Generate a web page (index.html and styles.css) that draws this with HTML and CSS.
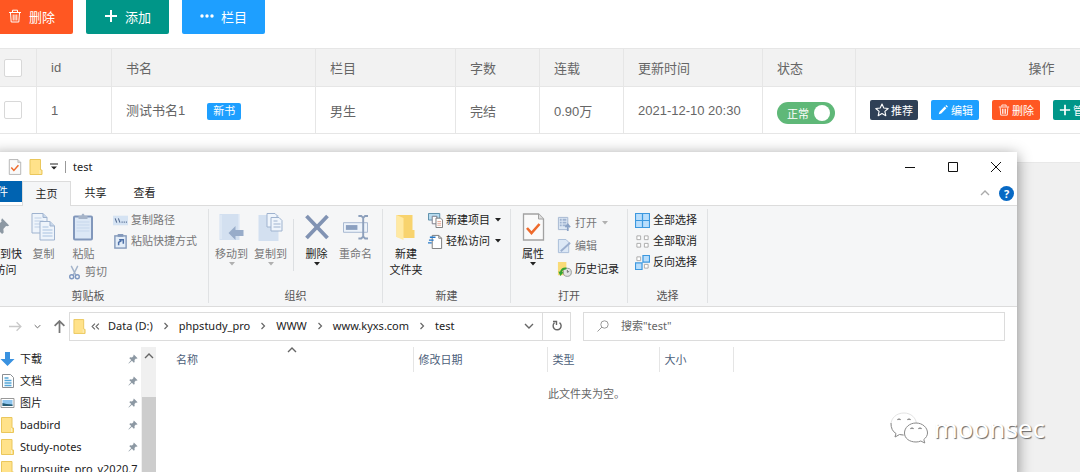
FILE: index.html
```html
<!DOCTYPE html>
<html lang="zh-CN">
<head>
<meta charset="utf-8">
<title>test</title>
<link rel="stylesheet" href="styles.css">
</head>
<body>
<svg class="sprite" aria-hidden="true">
  <symbol id="trash" viewBox="0 0 14 14"><path d="M1 3.500h12M4.500 3V1.200h5V3M2.500 4l.7 9h7.600l.7-9M5.200 5.500v6M7 5.500v6M8.800 5.500v6" fill="none" stroke="currentColor" stroke-width="1"/></symbol>
  <symbol id="plus" viewBox="0 0 14 14"><path d="M7 1v12M1 7h12" stroke="currentColor" stroke-width="2"/></symbol>
  <symbol id="dots" viewBox="0 0 14 14"><g fill="currentColor"><circle cx="2" cy="7" r="1.700"/><circle cx="7" cy="7" r="1.700"/><circle cx="12" cy="7" r="1.700"/></g></symbol>
  <symbol id="star" viewBox="0 0 14 14"><path d="M7 1l1.800 4 4.400.5-3.300 2.900.9 4.300L7 10.500l-3.800 2.200.9-4.300L.8 5.500 5.200 5z" fill="none" stroke="currentColor" stroke-width="1.100" stroke-linejoin="round"/></symbol>
  <symbol id="pencil" viewBox="0 0 14 14"><path d="M2 12l1-3 6-6 2 2-6 6zM9.800 2.200l1-1 2 2-1 1z" fill="currentColor"/></symbol>
  <symbol id="folder" viewBox="0 0 14 16"><path d="M1 .5h10.500V11H13v4.500H1z" fill="#ffe28a" stroke="#eac75c"/><path d="M11 11v4" stroke="#f8f0c8"/></symbol>
  <symbol id="check-doc" viewBox="0 0 22 28"><path d="M1 1h15l5 5v21H1z" fill="#fafafa" stroke="#a2a2a2" stroke-width="1.300"/><path d="M16 1v5h5" fill="#ddd" stroke="#a2a2a2"/><path d="M4.500 15l4.500 5 8-9" fill="none" stroke="#ee6a2c" stroke-width="2.600"/></symbol>
  <symbol id="pin" viewBox="0 0 12 12"><path d="M7 .5L11.500 5l-1.200.6-.8-.3-1.700 1.900.2 2.300-1 .9-2.300-2.300L1 11.500.5 11l3.400-3.700L1.600 5l.9-1 2.300.2 1.900-1.700-.3-.8z" fill="#8c98a3"/></symbol>
  <symbol id="down" viewBox="0 0 6 4"><path d="M0 0h6L3 3.500z" fill="currentColor"/></symbol>
  <symbol id="chev" viewBox="0 0 10 6"><path d="M1 1l4 4 4-4" fill="none" stroke="currentColor" stroke-width="1.400"/></symbol>
  <symbol id="chev-r" viewBox="0 0 6 8"><path d="M1.500 1l3 3-3 3" fill="none" stroke="currentColor" stroke-width="1.200"/></symbol>
  <symbol id="copy" viewBox="0 0 24 28"><g stroke="#9fb3cf" fill="#eef4fb"><path d="M.5.5h11l4 4V20H.5z"/><path d="M11.500.5v4h4" fill="#c9d8eb"/><path d="M3 5h7M3 8h9M3 11h9M3 14h9" stroke="#bfd0e6"/><path d="M8.500 8.500h10l4.500 4.500v14H8.500z"/><path d="M18.500 8.500V13H23" fill="#c9d8eb"/><path d="M11 14h6M11 17h10M11 20h10M11 23h10" stroke="#a9c2e0"/></g></symbol>
  <symbol id="clip" viewBox="0 0 22 28"><rect x="1.500" y="3.500" width="18" height="23" rx="1" fill="#dce8f6" stroke="#8197bb" stroke-width="2"/><path d="M4 9h13M4 12h13M4 15h13M4 18h13" stroke="#c6d7ec"/><path d="M6 6V3h3q0-2.500 1.500-2.500T12 3h3v3z" fill="#a5b3c8"/></symbol>
  <symbol id="path" viewBox="0 0 14 10"><path d="M0 .5h14v9H0z" fill="#d5e3f3"/><path d="M2 3l1.500 4M5 3l1.500 4M8 6.500h1M10 6.500h1M12 6.500h1" stroke="#536b91"/></symbol>
  <symbol id="shortcut" viewBox="0 0 14 16"><rect x="1" y="2" width="12" height="13" fill="#e3edf8" stroke="#8499bb" stroke-width="1.500"/><path d="M4 0h6v3H4z" fill="#8499bb"/><path d="M5 12V9l3-2M5.500 6H10v4.500" fill="none" stroke="#4d70a8" stroke-width="1.600"/></symbol>
  <symbol id="scissors" viewBox="0 0 12 16"><path d="M2.500 1l5 10M9.500 1l-5 10" stroke="#a3b3ca" stroke-width="1.500"/><g fill="none" stroke="#7e97c0" stroke-width="1.500"><circle cx="3" cy="12.500" r="2.100"/><circle cx="9" cy="12.500" r="2.100"/></g></symbol>
  <symbol id="move" viewBox="0 0 24 28"><path d="M0 1h20v26H0z" fill="#d3e0f0"/><path d="M1.500 2v24M19.500 1v20" stroke="#e7eff8"/><path d="M9 20l7-7v4h8v6h-8v4z" fill="#98acc9"/></symbol>
  <symbol id="copy-to" viewBox="0 0 24 28"><path d="M0 2h20v26H0z" fill="#d3e0f0"/><g fill="#eff5fc" stroke="#9fb3cf"><path d="M8.500.5h8l2 2V14h-10z"/><path d="M12.500 4.500h8l3 3V18h-11z"/><path d="M15 8h4M15 11h7M15 14h7"/></g></symbol>
  <symbol id="cross" viewBox="0 0 24 28"><path d="M2 3l21 22M23 3L2 25" stroke="#8193b3" stroke-width="3.800"/></symbol>
  <symbol id="rename" viewBox="0 0 26 28"><path d="M.5 9.500h25v10H.5z" fill="#edf3fa" stroke="#a5b6cf"/><path d="M3 12h12v5H3z" fill="#8ba0c0"/><path d="M16 2.500h3l2 2 2-2h3M21 4v20M16 26h3l2-2 2 2h3" fill="none" stroke="#8da0bc" stroke-width="2"/></symbol>
  <symbol id="big-folder" viewBox="0 0 20 28"><path d="M0 2h16v15h2v8H8l-8-1z" fill="#f8d36e"/><path d="M0 2l7 3v22l-7-3z" fill="#ffe9a3"/></symbol>
  <symbol id="new-item" viewBox="0 0 16 16"><path d="M.5.5h12v7H.5z" fill="#b8dcf0" stroke="#568ba8"/><path d="M4.500 3.500h5v8h-5z" fill="#fff" stroke="#778"/><path d="M8.500 5.500h5l2 2v8h-7z" fill="#fff" stroke="#777"/><path d="M10 9h4M10 11h4M10 13h4" stroke="#e3a290"/></symbol>
  <symbol id="easy" viewBox="0 0 16 16"><path d="M4.500 1.500h7l3 3v11h-10z" fill="#fff" stroke="#777"/><path d="M11.500 1.500v3h3" fill="none" stroke="#777"/><path d="M2 3.500h6M1 6.500h5M0 9.500h4" stroke="#2779c8" stroke-width="1.500"/></symbol>
  <symbol id="open" viewBox="0 0 14 16"><path d="M.5 1.500h10v13H.5z" fill="#dce7f4" stroke="#a4b6d0"/><path d="M2 4h2M2 7h2M2 10h2M5 4h4M5 7h4M5 10h4" stroke="#9fb3d0" stroke-width="2"/><path d="M10.500 16v-6M8 12l2.500-3 2.500 3" fill="none" stroke="#8aa2c5" stroke-width="1.800"/></symbol>
  <symbol id="edit" viewBox="0 0 14 16"><path d="M.5.5h8l3 3v11H.5z" fill="#dce8f6" stroke="#a7bcd8"/><path d="M3 13L13 4" stroke="#9bafcf" stroke-width="2"/></symbol>
  <symbol id="history" viewBox="0 0 16 16"><path d="M1 0h9v9h2v5H1z" fill="#f9db77"/><circle cx="11" cy="11" r="4.300" fill="#e3e5e5" stroke="#939696"/><path d="M11 8.500V11l2-1" fill="none" stroke="#666"/><path d="M4 12q1-6 6-5" fill="none" stroke="#33a432" stroke-width="2.200"/><path d="M1.500 10l5.500 1-3.500 4z" fill="#33a432"/></symbol>
  <symbol id="sel-all" viewBox="0 0 16 16"><path d="M.5.5h15v15H.5zM8 0v16M0 8h16" fill="#b9defc" stroke="#3c98df" stroke-width="1.300"/></symbol>
  <symbol id="sel-none" viewBox="0 0 16 16"><path d="M2 2h4v4H2zM10 2h4v4h-4zM2 10h4v4H2zM10 10h4v4h-4z" fill="#fff" stroke="#aaa"/></symbol>
  <symbol id="sel-inv" viewBox="0 0 16 16"><path d="M8.500.5h7v7h-7zM.5 8.500h7v7h-7z" fill="#b9defc" stroke="#3c98df" stroke-width="1.300"/><path d="M2 2h4v4H2zM10 10h4v4h-4z" fill="#fff" stroke="#aaa"/></symbol>
</svg>

<main class="panel">
  <div class="toolbar">
    <button class="btn red"><svg class="i14"><use href="#trash"/></svg>删除</button>
    <button class="btn green"><svg class="i14"><use href="#plus"/></svg>添加</button>
    <button class="btn blue"><svg class="i14"><use href="#dots"/></svg>栏目</button>
  </div>
  <div class="table-wrap">
    <table class="books">
      <colgroup><col class="c-check"><col class="c-id"><col class="c-name"><col class="c-cat"><col class="c-num"><col class="c-num"><col class="c-time"><col class="c-state"><col></colgroup>
      <thead>
        <tr><th class="check"><input type="checkbox" class="box" aria-label="全选"></th><th>id</th><th>书名</th><th>栏目</th><th>字数</th><th>连载</th><th>更新时间</th><th>状态</th><th class="center">操作</th></tr>
      </thead>
      <tbody>
        <tr>
          <td class="check"><input type="checkbox" class="box" aria-label="选择 1"></td><td>1</td>
          <td>测试书名1<span class="badge">新书</span></td><td>男生</td><td>完结</td><td>0.90万</td><td>2021-12-10 20:30</td>
          <td class="state"><label class="switch">正常<input type="checkbox" checked></label></td>
          <td><div class="ops">
            <button class="op navy"><svg class="i14"><use href="#star"/></svg>推荐</button>
            <button class="op blue"><svg class="i12"><use href="#pencil"/></svg>编辑</button>
            <button class="op red"><svg class="i12"><use href="#trash"/></svg>删除</button>
            <button class="op green"><svg class="i12"><use href="#plus"/></svg>管理</button>
          </div></td>
        </tr>
      </tbody>
    </table>
  </div>
</main>

<section class="window" aria-label="test">
  <header class="titlebar">
    <svg class="tb-icon"><use href="#check-doc"/></svg>
    <svg class="tb-icon"><use href="#folder"/></svg>
    <svg class="tb-more" viewBox="0 0 8 7"><path d="M0 1h8" stroke="#222"/><path d="M1 3.500h6L4 6.500z" fill="#222"/></svg>
    <span class="tb-sep"></span>
    <span>test</span>
    <div class="controls">
      <button aria-label="最小化"><svg viewBox="0 0 10 10"><path d="M0 5.500h10" stroke="#111"/></svg></button>
      <button aria-label="最大化"><svg viewBox="0 0 10 10"><path d="M.5.5h9v9h-9z" fill="none" stroke="#111"/></svg></button>
      <button aria-label="关闭"><svg viewBox="0 0 10 10"><path d="M0 0l10 10M10 0L0 10" stroke="#111"/></svg></button>
    </div>
  </header>
  <nav class="tabs">
    <button class="tab file">文件</button>
    <button class="tab active">主页</button>
    <button class="tab">共享</button>
    <button class="tab">查看</button>
    <div class="help">
      <svg class="chev up"><use href="#chev"/></svg>
      <button class="help-btn" aria-label="帮助">?</button>
    </div>
  </nav>

  <div class="ribbon">
    <div class="group clipboard">
      <div class="tools">
        <button class="tool dark wide"><svg class="pin-big"><use href="#pin"/></svg><span>固定到快速访问</span></button>
        <button class="tool"><svg><use href="#copy"/></svg><span>复制</span></button>
        <button class="tool"><svg><use href="#clip"/></svg><span>粘贴</span></button>
        <div class="list">
          <button class="row"><svg><use href="#path"/></svg>复制路径</button>
          <button class="row"><svg><use href="#shortcut"/></svg>粘贴快捷方式</button>
        </div>
        <button class="row cut"><svg><use href="#scissors"/></svg>剪切</button>
      </div>
      <div class="caption">剪贴板</div>
    </div>
    <div class="group organize">
      <div class="tools">
        <button class="tool"><svg><use href="#move"/></svg><span>移动到</span><svg class="arrow"><use href="#down"/></svg></button>
        <button class="tool"><svg><use href="#copy-to"/></svg><span>复制到</span><svg class="arrow"><use href="#down"/></svg></button>
        <span class="divider"></span>
        <button class="tool dark"><svg><use href="#cross"/></svg><span>删除</span><svg class="arrow"><use href="#down"/></svg></button>
        <button class="tool"><svg><use href="#rename"/></svg><span>重命名</span></button>
      </div>
      <div class="caption">组织</div>
    </div>
    <div class="group create">
      <div class="tools">
        <button class="tool dark"><svg><use href="#big-folder"/></svg><span>新建<br>文件夹</span></button>
        <div class="list">
          <button class="row dark"><svg><use href="#new-item"/></svg>新建项目<svg class="arrow"><use href="#down"/></svg></button>
          <button class="row dark"><svg><use href="#easy"/></svg>轻松访问<svg class="arrow"><use href="#down"/></svg></button>
        </div>
      </div>
      <div class="caption">新建</div>
    </div>
    <div class="group opening">
      <div class="tools">
        <button class="tool dark"><svg><use href="#check-doc"/></svg><span>属性</span><svg class="arrow"><use href="#down"/></svg></button>
        <div class="list loose">
          <button class="row"><svg><use href="#open"/></svg>打开<svg class="arrow"><use href="#down"/></svg></button>
          <button class="row"><svg><use href="#edit"/></svg>编辑</button>
          <button class="row dark"><svg><use href="#history"/></svg>历史记录</button>
        </div>
      </div>
      <div class="caption">打开</div>
    </div>
    <div class="group selecting">
      <div class="tools">
        <div class="list">
          <button class="row dark"><svg><use href="#sel-all"/></svg>全部选择</button>
          <button class="row dark"><svg><use href="#sel-none"/></svg>全部取消</button>
          <button class="row dark"><svg><use href="#sel-inv"/></svg>反向选择</button>
        </div>
      </div>
      <div class="caption">选择</div>
    </div>
  </div>

  <div class="location">
    <div class="arrows">
      <svg class="nav-arrow" viewBox="0 0 12 12"><path d="M0 6h11M7 2l4 4-4 4" fill="none" stroke="#c9c9c9" stroke-width="1.200"/></svg>
      <svg class="chev tiny"><use href="#chev"/></svg>
      <svg class="nav-arrow" viewBox="0 0 12 12"><path d="M6 12V1M1.500 5.500L6 1l4.500 4.500" fill="none" stroke="#777" stroke-width="1.600"/></svg>
    </div>
    <div class="address">
      <svg class="f-icon"><use href="#folder"/></svg>
      <svg class="back" viewBox="0 0 8 8"><path d="M3.500 1.500L1 4l2.500 2.500M7 1.500L4.500 4 7 6.500" fill="none" stroke="#666"/></svg>
      <a href="#d">Data (D:)</a><svg class="sep"><use href="#chev-r"/></svg>
      <a href="#p">phpstudy_pro</a><svg class="sep"><use href="#chev-r"/></svg>
      <a href="#w">WWW</a><svg class="sep"><use href="#chev-r"/></svg>
      <a href="#k">www.kyxs.com</a><svg class="sep"><use href="#chev-r"/></svg>
      <a href="#t">test</a>
      <svg class="chev drop"><use href="#chev"/></svg>
      <button class="refresh" aria-label="刷新"><svg viewBox="0 0 12 12"><path d="M8.500 2.600A4 4 0 1 1 3.500 2.800M2 1.500h3.500V5" fill="none" stroke="#666" stroke-width="1.400"/></svg></button>
    </div>
    <label class="search">
      <svg viewBox="0 0 12 12"><circle cx="7.500" cy="4.500" r="3.700" fill="none" stroke="#999"/><path d="M5 7L.5 11.500" stroke="#999"/></svg>
      <input type="text" placeholder="搜索&quot;test&quot;" aria-label="搜索">
    </label>
  </div>

  <div class="content">
    <ul class="places">
      <li><svg class="p-icon" viewBox="0 0 14 16"><path d="M4.500 1h5v7H14l-7 7-7-7h4.500z" fill="#3a92e0"/></svg><a href="#1">下载</a><svg class="pin"><use href="#pin"/></svg></li>
      <li><svg class="p-icon" viewBox="0 0 14 16"><path d="M2 1.500h8l3 3v10H2z" fill="#fff" stroke="#8a8f94"/><path d="M4 5h4M4 7.500h7M4 10h7M4 12.500h7" stroke="#54a6d8" stroke-width="1.500"/></svg><a href="#2">文档</a><svg class="pin"><use href="#pin"/></svg></li>
      <li><svg class="p-icon" viewBox="0 0 14 16"><path d="M.5 3.500h13v9H.5z" fill="#fff" stroke="#999"/><path d="M2 5h10v6H2z" fill="#8fc6ef"/><path d="M2 8l4 1 6 .5V11H2z" fill="#245c75"/></svg><a href="#3">图片</a><svg class="pin"><use href="#pin"/></svg></li>
      <li><svg class="p-icon"><use href="#folder"/></svg><a href="#4">badbird</a><svg class="pin"><use href="#pin"/></svg></li>
      <li><svg class="p-icon"><use href="#folder"/></svg><a href="#5">Study-notes</a><svg class="pin"><use href="#pin"/></svg></li>
      <li><svg class="p-icon"><use href="#folder"/></svg><a href="#6">burpsuite_pro_v2020.7</a></li>
    </ul>
    <div class="scroll"><svg class="chev up"><use href="#chev"/></svg><div class="thumb"></div></div>
    <div class="files">
      <table class="cols">
        <tr><th class="f-name">名称<svg class="chev up sort"><use href="#chev"/></svg></th><th class="f-date">修改日期</th><th class="f-type">类型</th><th class="f-size">大小</th><th class="f-rest"></th></tr>
      </table>
      <p class="empty">此文件夹为空。</p>
    </div>
  </div>
</section>

<div class="watermark">
  <svg viewBox="0 0 38 32"><g fill="#fff"><path d="M14 1C6.500 1 1 6 1 12.500c0 4 2 7 5 9L5 25l4.500-2.500c9 2.500 17-2.500 17-10C26.500 6 21 1 14 1z" stroke="#e4e4e4"/><path d="M1 11c0 5 1.500 8.500 5 10.500L5 25l4.500-2.500 4 .5" stroke="#8a8a8a"/><path d="M26 11c-6.500 0-11.500 4.500-11.500 10S19.500 30 26 30c1.800 0 3.300-.3 4.800-1l4 2-1-3.500c2.200-1.700 3.700-4 3.700-6.500 0-5.500-5-10-11.500-10z" stroke="#8a8a8a"/></g><path d="M7.500 8q1.500-2 3 0M17.500 8q1.500-2 3 0M20.500 17q1.500-2 3 0M28.500 17q1.500-2 3 0" fill="none" stroke="#777" stroke-width="1.200"/></svg>
  <span>moonsec</span>
</div>
</body>
</html>
```
FILE: styles.css
```css
* { box-sizing: border-box; }

body {
  margin: 0;
  height: 100vh;
  overflow: hidden;
  position: relative;
  background: #f0f0f0;
  font-family: "Liberation Sans", "Noto Sans CJK SC", sans-serif;
  font-size: 13px;
  color: #666;
}

.sprite { display: none; }
svg { flex: none; display: block; }

button {
  border: 0;
  margin: 0;
  padding: 0;
  background: none;
  font: inherit;
  color: inherit;
  white-space: nowrap;
}

a { color: inherit; text-decoration: none; }

.i14 { width: 14px; height: 14px; }
.i12 { width: 12px; height: 12px; }

/* Book list */
.panel {
  background: #fff;
  padding-bottom: 28px;
  border-bottom: 1px solid #e8e8e8;
  overflow: hidden;
}

.toolbar {
  display: flex;
  gap: 13px;
  margin-left: -10px;
  margin-bottom: 14px;
}

.btn {
  display: flex;
  align-items: center;
  justify-content: center;
  gap: 7px;
  width: 83px;
  height: 34px;
  padding-bottom: 2px;
  border-radius: 0 0 2px 2px;
  color: #fff;
}

.red { background: #ff5722; }
.green { background: #009688; }
.blue { background: #1e9fff; }
.navy { background: #2f4056; }

.table-wrap { overflow: hidden; margin-left: -1px; }

.books {
  table-layout: fixed;
  width: 100%;
  min-width: 1229px;
  border-collapse: collapse;
}

.c-check { width: 37px; }
.c-id { width: 75px; }
.c-name { width: 204px; }
.c-cat { width: 140px; }
.c-num { width: 84px; }
.c-time { width: 139px; }
.c-state { width: 93px; }

.books th,
.books td {
  padding: 0 14px;
  border: 1px solid #e6e6e6;
  text-align: left;
  font-weight: 400;
  white-space: nowrap;
}

.books th { height: 38px; background: #f2f2f2; }
.books td { height: 47px; }
.books .center { text-align: center; }
.books .check { padding: 0 4px; }

.box {
  appearance: none;
  display: block;
  width: 18px;
  height: 18px;
  margin: 0;
  border: 1px solid #d8d8d8;
  border-radius: 2px;
  background: #fff;
}

.badge {
  display: inline-block;
  margin-left: 22px;
  padding: 0 6px;
  border-radius: 2px;
  background: #1e9fff;
  color: #fff;
  font-size: 11px;
  line-height: 17px;
}

.books .state { padding-top: 6px; }

.switch {
  display: flex;
  align-items: center;
  justify-content: space-between;
  width: 58px;
  height: 22px;
  padding: 0 5px 0 10px;
  border-radius: 11px;
  background: #5fb878;
  color: #fff;
  font-size: 11px;
}

.switch input {
  appearance: none;
  width: 16px;
  height: 16px;
  margin: 0;
  border-radius: 50%;
  background: #fff;
}

.ops { display: flex; gap: 13px; }

.op {
  display: flex;
  align-items: center;
  justify-content: center;
  gap: 2px;
  width: 48px;
  height: 20px;
  border-radius: 2px;
  color: #fff;
  font-size: 11px;
}

/* Explorer window, floating over the page */
.window {
  position: absolute;
  top: 152px;
  left: -8px;
  right: 63px;
  bottom: -8px;
  padding-left: 8px;
  display: flex;
  flex-direction: column;
  overflow: hidden;
  background: #fff;
  box-shadow: 0 3px 14px rgba(0, 0, 0, 0.45);
  font-family: "Noto Sans", "Noto Sans CJK SC", sans-serif;
  font-size: 11px;
  line-height: 16px;
  color: #222;
}

.titlebar {
  display: flex;
  align-items: center;
  gap: 7px;
  height: 29px;
  padding-left: 8px;
}

.tb-icon { width: 14px; height: 16px; }
.tb-more { width: 8px; height: 7px; }
.tb-sep { width: 1px; height: 12px; background: #999; }

.controls { display: flex; margin-left: auto; }

.controls button {
  display: grid;
  place-items: center;
  width: 43px;
  height: 29px;
}

.controls svg { width: 10px; height: 10px; }

.tabs {
  display: flex;
  height: 25px;
  border-bottom: 1px solid #dcdcdc;
}

.tab { width: 49px; height: 24px; }

.tab.file {
  width: 42px;
  height: 21px;
  margin-left: -20px;
  padding-right: 14px;
  text-align: right;
  background: #0063b1;
  color: #fff;
}

.tab.active {
  height: 25px;
  background: #f5f6f7;
  border: 1px solid #dcdcdc;
  border-bottom: 0;
}

.help {
  display: flex;
  align-items: center;
  gap: 9px;
  margin-left: auto;
  padding-right: 3px;
}

.help-btn {
  width: 15px;
  height: 15px;
  border-radius: 50%;
  background: #0869c4;
  color: #fff;
  font-weight: 700;
  line-height: 15px;
}

.chev { width: 10px; height: 6px; color: #666; }
.chev.up { transform: rotate(180deg); }
.chev.tiny { width: 7px; height: 5px; }
.help .chev { color: #aaa; }

/* Ribbon */
.ribbon {
  display: flex;
  height: 101px;
  background: #f5f6f7;
  border-bottom: 1px solid #dcdcdc;
  color: #777;
}

.group {
  display: flex;
  flex-direction: column;
  margin: 3px 0;
  border-right: 1px solid #e0e2e4;
}

.clipboard { width: 241px; margin-left: -32px; padding-left: 8px; }
.organize { width: 174px; padding-left: 3px; }
.create { width: 128px; padding-left: 3px; }
.opening { width: 117px; padding-left: 2px; }
.selecting { width: 80px; padding-left: 7px; }

.clipboard,
.create,
.opening { align-items: flex-start; }

.tools { display: flex; flex: 1; }

.clipboard .tools {
  display: grid;
  grid-template-columns: 48px 40px 40px auto;
  grid-template-rows: 55px 18px;
}

.caption {
  align-self: stretch;
  height: 15px;
  text-align: center;
  line-height: 15px;
  color: #555;
}

.organize .caption { margin-left: -3px; }
.clipboard .caption { margin-left: -8px; }
.create .caption { margin-left: -3px; }
.opening .caption { margin-left: -2px; }
.selecting .caption { margin-left: -7px; }

.tool {
  display: flex;
  flex-direction: column;
  align-items: center;
  width: 39px;
  padding-top: 4px;
}

.create .tool,
.opening .tool { width: 40px; }

.tool > svg { width: 25px; height: 28px; }
.tool > span { padding-top: 5px; white-space: nowrap; }
.tool.wide { width: 48px; }
.tool.wide > span { width: 46px; white-space: normal; }
.tool > .pin-big { width: 19px; height: 28px; }

.tool > .arrow,
.row > .arrow { width: 6px; height: 4px; color: #b0b0b0; }

.dark { color: #222; }
.dark > .arrow { color: #222; }

.divider { width: 1px; height: 52px; margin: 10px 3px 0; background: #dcdfe2; }

.list {
  display: flex;
  flex-direction: column;
  align-items: flex-start;
  gap: 5px;
  padding-top: 3px;
}

.clipboard .list { grid-column: 4; grid-row: 1; margin-left: 9px; }
.create .list { padding-left: 2px; }
.opening .list { padding-left: 4px; }
.list.loose { gap: 7px; padding-top: 6px; }

.row {
  display: flex;
  align-items: center;
  gap: 3px;
  height: 16px;
}

.list .row > .arrow { margin-left: 2px; }
.row > svg { width: 15px; height: 15px; }
.row.dark > .arrow { color: #222; }
.row.cut { grid-column: 3 / 5; grid-row: 2; padding-left: 3px; }

.tool.dark > .arrow { color: #222; }

/* Address and search */
.location {
  display: flex;
  align-items: center;
  height: 38px;
  padding: 0 12px 0 9px;
}

.arrows { display: flex; align-items: center; gap: 12px; width: 60px; }
.nav-arrow { width: 13px; height: 13px; }

.address {
  display: flex;
  align-items: center;
  flex: 497 1 0;
  height: 29px;
  padding-left: 3px;
  border: 1px solid #dcdcdc;
}

.f-icon { width: 13px; height: 15px; margin-right: 5px; }
.back { width: 9px; height: 9px; margin-right: 8px; }
.sep { width: 6px; height: 8px; margin: 0 10px; color: #666; }
.drop { margin-left: auto; margin-right: 8px; }

.refresh {
  display: grid;
  place-items: center;
  width: 28px;
  height: 27px;
  border-left: 1px solid #dcdcdc;
}

.refresh svg { width: 12px; height: 12px; }

.search {
  display: flex;
  align-items: center;
  gap: 12px;
  flex: 407 1 0;
  height: 29px;
  margin-left: 12px;
  padding-left: 13px;
  border: 1px solid #dcdcdc;
}

.search svg { width: 12px; height: 12px; }

.search input {
  flex: 1;
  min-width: 0;
  border: 0;
  padding: 0;
  font: inherit;
  background: none;
}

.search input::placeholder { color: #666; }

/* Folder body */
.content { display: flex; flex: 1; min-height: 0; padding-top: 2px; }

.places {
  width: 141px;
  margin: 0;
  padding: 1px 0 0;
  list-style: none;
  overflow: hidden;
}

.places li {
  display: flex;
  align-items: center;
  height: 22px;
  padding-right: 3px;
  gap: 5px;
  white-space: nowrap;
}

.p-icon { width: 15px; height: 16px; }
.pin { width: 10px; height: 10px; margin-left: auto; }

.scroll {
  display: flex;
  flex-direction: column;
  align-items: center;
  width: 15px;
  padding-top: 6px;
  background: #f0f0f0;
}

.thumb { width: 14px; flex: 1; margin-top: 38px; background: #cdcdcd; }

.files { flex: 1; }

.cols { width: 100%; table-layout: fixed; border-collapse: collapse; }

.cols th {
  position: relative;
  height: 25px;
  padding: 0 5px;
  border-right: 1px solid #e5e5e5;
  text-align: left;
  font-weight: 400;
  color: #4c607a;
}

.cols .f-name { width: 257px; padding-left: 20px; }
.cols .f-date { width: 134px; }
.cols .f-type { width: 112px; }
.cols .f-size { width: 74px; }
.cols .f-rest { border-right: 0; }

.sort { position: absolute; top: 0; left: 131px; }

.empty { margin: 14px 0 0; text-align: center; color: #666; }

.watermark {
  position: absolute;
  right: 35px;
  bottom: 26px;
  display: flex;
  align-items: center;
  gap: 6px;
  font-family: "Noto Sans", sans-serif;
  font-size: 26px;
  line-height: 36px;
  color: #fff;
  text-shadow: 1px 1px 1px #666;
}

.watermark svg { width: 38px; height: 32px; }
```
